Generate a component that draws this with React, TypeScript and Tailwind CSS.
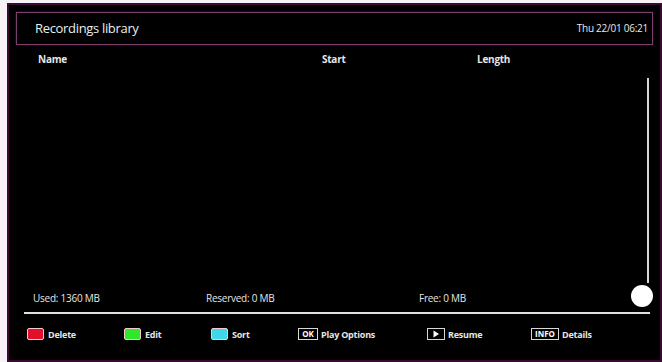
import React from "react";

const font = { fontFamily: '"Open Sans", "Liberation Sans", sans-serif' };

function Key({ color, label, w }: { color: string; label: string; w: string }) {
  return (
    <div className={`flex items-center ${w}`}>
      <div className={`w-[17px] h-[12px] rounded-[2px] border border-[#f3c9d0] ${color}`} />
      <span className="ml-[4px] text-[9px] font-bold text-[#e6e6e6] tracking-tight">{label}</span>
    </div>
  );
}

function Btn({ children, label, w, boxW }: { children: React.ReactNode; label: string; w: string; boxW: string }) {
  return (
    <div className={`flex items-center ${w}`}>
      <div className={`${boxW} h-[12px] border border-[#d8d8d8] flex items-center justify-center text-[8px] font-bold text-white leading-none`}>
        {children}
      </div>
      <span className="ml-[3px] text-[9px] font-bold text-[#e6e6e6] tracking-tight">{label}</span>
    </div>
  );
}

export default function App() {
  return (
    <div className="w-[662px] h-[362px] bg-[#f7f2f6] pl-[7px] pt-[3px] flex" style={font}>
      <div className="flex-1 bg-black border-[2px] border-[#3a0a33] flex flex-col px-[7px] pt-[7px] pb-[7px] relative">
        <div className="h-[33px] border border-[#7b3e6d] shadow-[0_0_2px_#4a1a40] flex items-center justify-between pl-[18px] pr-[4px]">
          <span className="text-[13px] font-medium text-[#eeeeee] tracking-tight">Recordings library</span>
          <span className="text-[10px] font-medium text-[#e8e8e8] tracking-tight">Thu 22/01 06:21</span>
        </div>
        <div className="flex text-[10px] font-bold text-[#e6e6e6] mt-[7px] tracking-tight">
          <span className="w-[306px] pl-[22px]">Name</span>
          <span className="w-[155px]">Start</span>
          <span>Length</span>
        </div>
        <div className="flex-1" />
        <div className="absolute right-[11px] top-[73px] w-[2px] h-[205px] bg-[#d6d6d6]" />
        <div className="absolute right-[7px] top-[280px] w-[22px] h-[22px] rounded-full bg-white" />
        <div className="flex text-[10px] text-[#e6e6e6] tracking-tight pl-[17px]">
          <span className="w-[173px]">Used: 1360 MB</span>
          <span className="w-[213px]">Reserved: 0 MB</span>
          <span>Free: 0 MB</span>
        </div>
        <div className="h-[2px] bg-[#e0e0e0] mt-[6px] mr-[3px] ml-[8px]" />
        <div className="flex items-center mt-[14px] pl-[11px] mb-[12px]">
          <Key color="bg-[#e0102a]" label="Delete" w="w-[97px]" />
          <Key color="bg-[#2ee82a]" label="Edit" w="w-[87px]" />
          <Key color="bg-[#3fd8e6]" label="Sort" w="w-[87px]" />
          <Btn label="Play Options" w="w-[129px]" boxW="w-[20px]">OK</Btn>
          <Btn label="Resume" w="w-[104px]" boxW="w-[18px]">
            <svg width="8" height="8" viewBox="0 0 8 8"><path d="M1.5 0.5 L7 4 L1.5 7.5 Z" fill="white" /></svg>
          </Btn>
          <Btn label="Details" w="w-[80px]" boxW="w-[28px]">INFO</Btn>
        </div>
      </div>
    </div>
  );
}
